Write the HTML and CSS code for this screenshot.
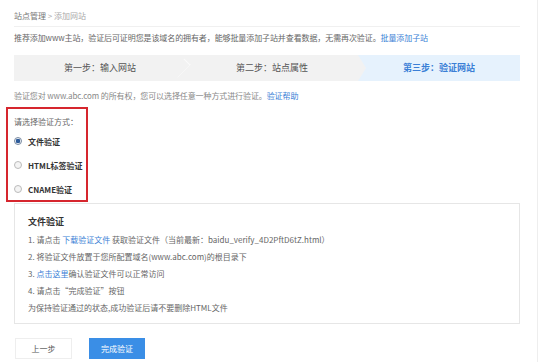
FILE: index.html
```html
<!DOCTYPE html>
<html lang="zh-CN">
<head>
  <meta charset="UTF-8" />
  <title>添加网站</title>
  <link rel="stylesheet" href="styles.css">
</head>
<body>
  <div class="page">
    <main class="main">
      <div class="crumb">站点管理 <span class="gt">&gt;</span> <span class="cur">添加网站</span></div>
      <p class="tip">推荐添加www主站，验证后可证明您是该域名的拥有者，能够批量添加子站并查看数据，无需再次验证。<a href="#">批量添加子站</a></p>

      <div class="steps">
        <div class="step">第一步：输入网站</div>
        <div class="step">第二步：站点属性</div>
        <div class="step active">第三步：验证网站</div>
      </div>

      <p class="desc">验证您对 www.abc.com 的所有权，您可以选择任意一种方式进行验证。<a href="#">验证帮助</a></p>

      <div class="methods">
        <div class="methods-title">请选择验证方式：</div>
        <label class="radio"><span class="dot checked"></span>文件验证</label>
        <label class="radio"><span class="dot"></span>HTML标签验证</label>
        <label class="radio"><span class="dot"></span>CNAME验证</label>
      </div>

      <div class="panel">
        <h4>文件验证</h4>
        <p>1. 请点击 <a href="#">下载验证文件</a> 获取验证文件（当前最新：baidu_verify_4D2PftD6tZ.html）</p>
        <p>2. 将验证文件放置于您所配置域名(www.abc.com)的根目录下</p>
        <p>3. <a href="#">点击这里</a>确认验证文件可以正常访问</p>
        <p>4. 请点击“完成验证”按钮</p>
        <p>为保持验证通过的状态,成功验证后请不要删除HTML文件</p>
      </div>

      <div class="actions">
        <button class="btn">上一步</button>
        <button class="btn primary">完成验证</button>
      </div>
    </main>
    <aside class="side"></aside>
  </div>
</body>
</html>
```

FILE: styles.css
```css
*{margin:0;padding:0;box-sizing:border-box}
body{font-family:"Noto Sans CJK SC","Liberation Sans",sans-serif;font-size:8px;color:#666;background:#fff}
a{color:#3b7fd6;text-decoration:none}
.page{display:flex;height:362px}
.main{width:537px;padding:0 17px 0 14px}
.side{flex:1;border-left:1px solid #eee}
.crumb{height:27px;line-height:32px;border-bottom:1px solid #f0f0f0;color:#777}
.crumb .gt,.crumb .cur{color:#aaa}
.tip{line-height:22px;margin-bottom:6px;letter-spacing:-0.1px}
.steps{display:flex;height:26px;background:#f2f2f2;font-size:9px;color:#555;line-height:26px}
.step{flex:1;text-align:center;position:relative}
.step:first-child::after{content:"";position:absolute;right:-4px;top:4px;width:17px;height:17px;border-top:1px solid #fbfbfb;border-right:1px solid #fbfbfb;transform:rotate(45deg) scaleX(0.5)}
.step.active{flex:0 0 162px;background:#e6f2fd;color:#3b7fd6;font-weight:bold;clip-path:polygon(0 0,100% 0,100% 100%,0 100%,8px 50%)}
.desc{line-height:22px;margin-top:4px;color:#888;letter-spacing:-0.1px}
.methods{margin-left:-8px;width:82px;height:95px;border:2px solid #d6262e;padding:6px 0 0 6px}
.methods-title{line-height:14px}
.radio{display:flex;align-items:center;height:24px;font-weight:bold;color:#333}
.dot{width:8px;height:8px;border-radius:50%;border:1px solid #bbb;background:#f4f4f4;margin-right:6px}
.dot.checked{border-color:#7a8aa0;background:radial-gradient(circle,#2d5b9a 0 2px,#e8eef6 2.5px)}
.panel{margin-top:1px;width:506px;height:121px;border:1px solid #e6e6e6;padding:10px 13px}
.panel h4{font-size:9px;color:#333;line-height:16px;margin-bottom:1px}
.panel p{line-height:17px}
.actions{display:flex;gap:17px;margin-top:14px;margin-left:1px}
.btn{width:57px;height:21px;border:1px solid #eee;background:#fff;color:#555;font-family:inherit;font-size:8px}
.btn.primary{width:56px;background:#3a8ee6;border-color:#3a8ee6;color:#fff}
```
